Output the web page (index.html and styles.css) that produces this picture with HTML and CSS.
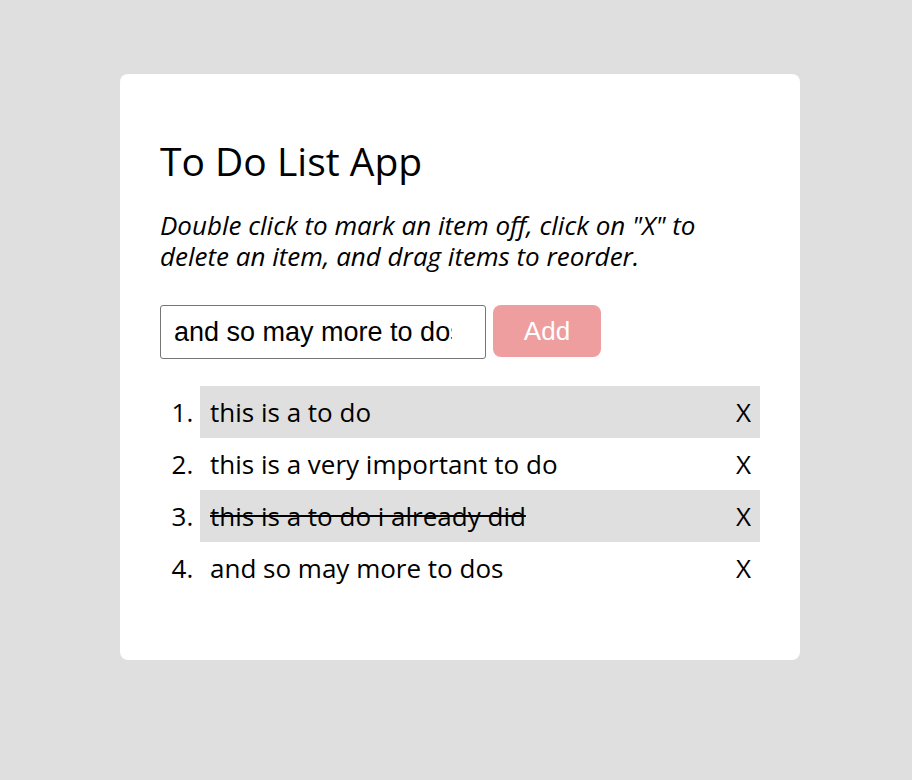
FILE: index.html
```html
<!DOCTYPE html>
<html>
<head>
<meta charset="utf-8">
<link rel="stylesheet" href="styles.css">
</head>
<body>
<div class="card">
  <h1 class="title">To Do List App</h1>
  <p class="hint">Double click to mark an item off, click on "X" to delete an item, and drag items to reorder.</p>
  <form class="add-form">
    <input class="add-input" type="text" value="and so may more to dos">
    <button class="add-btn" type="button">Add</button>
  </form>
  <ol class="todo-list">
    <li class="todo shaded"><span class="todo-text">this is a to do</span><span class="del">X</span></li>
    <li class="todo"><span class="todo-text">this is a very important to do</span><span class="del">X</span></li>
    <li class="todo shaded done"><span class="todo-text">this is a to do i already did</span><span class="del">X</span></li>
    <li class="todo"><span class="todo-text">and so may more to dos</span><span class="del">X</span></li>
  </ol>
</div>
</body>
</html>
```
FILE: styles.css
```css
html, body {
  margin: 0;
  padding: 0;
}
body {
  background: #dfdfdf;
  font-family: "Open Sans", sans-serif;
  color: #000;
  padding-top: 74px;
  height: 780px;
  box-sizing: border-box;
}
.card {
  width: 680px;
  margin: 0 0 0 120px;
  background: #fff;
  border-radius: 8px;
  padding: 61px 40px 66px;
  box-sizing: border-box;
}
.title {
  font-size: 39px;
  font-weight: 400;
  margin: 0;
  line-height: 52px;
}
.hint {
  font-style: italic;
  font-size: 26px;
  line-height: 31px;
  margin: 23px 0 0;
}
.add-form {
  display: flex;
  align-items: flex-start;
  gap: 7px;
  margin-top: 33px;
}
.add-input {
  width: 326px;
  height: 54px;
  box-sizing: border-box;
  border: 1px solid #767676;
  border-radius: 3px;
  padding: 0 33px 0 13px;
  font-family: "Liberation Sans", Arial, sans-serif;
  font-size: 27px;
  color: #000;
  margin: 0;
}
.add-btn {
  width: 108px;
  height: 52px;
  border: none;
  border-radius: 8px;
  background: #ee9e9e;
  color: #fff;
  font-family: "Liberation Sans", Arial, sans-serif;
  font-size: 26px;
  margin: 0;
  padding: 0;
}
.todo-list {
  margin: 27px 0 0;
  padding-left: 40px;
  font-size: 26px;
}
.todo {
  display: list-item;
  height: 52px;
  line-height: 52px;
  padding: 0 9px 0 10px;
}
.del {
  float: right;
}
.shaded {
  background: #dfdfdf;
}
.done .todo-text {
  text-decoration: line-through;
}
```
